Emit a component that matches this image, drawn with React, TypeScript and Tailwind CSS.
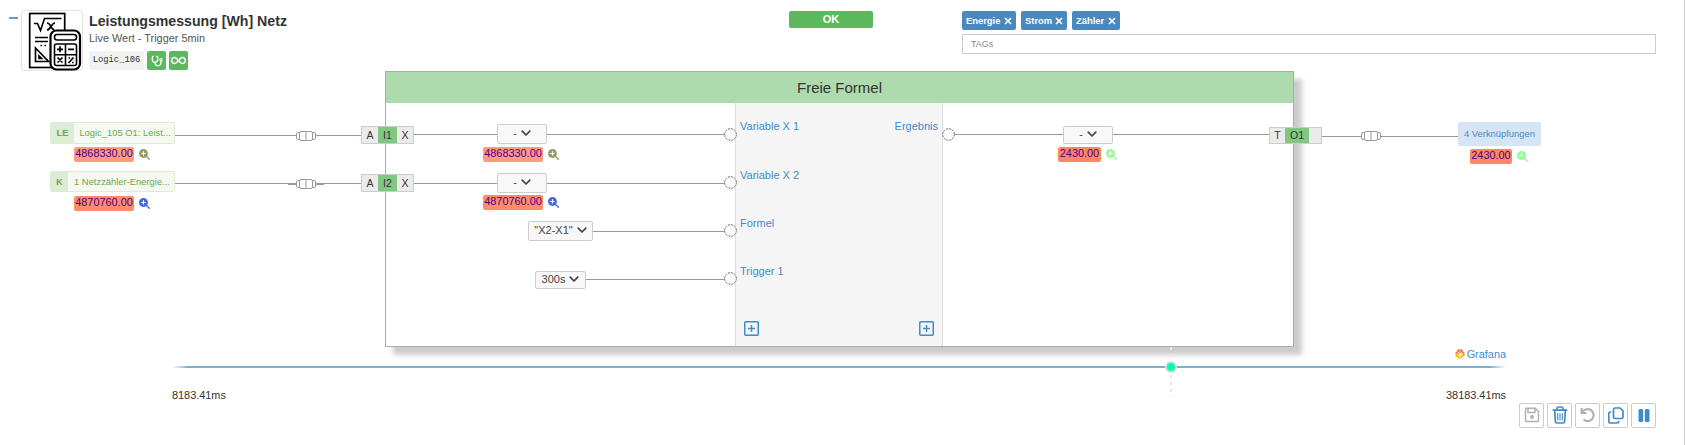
import type { ReactNode } from "react";
import { FaStethoscope, FaInfinity, FaMagnifyingGlassPlus } from "react-icons/fa6";

function Chevron() {
  return (
    <svg viewBox="0 0 10 7" className="h-[7px] w-[10px] shrink-0" fill="none" stroke="#444" strokeWidth="1.7">
      <path d="M1.200 1.200 5 5 8.800 1.200" strokeLinecap="round" strokeLinejoin="round" />
    </svg>
  );
}

function FormulaLogo() {
  return (
    <svg viewBox="0 0 54 60" className="h-[60px] w-[54px] shrink-0" fill="none" stroke="#000" strokeWidth="2">
      <rect x="1.700" y="2.500" width="35" height="54" strokeWidth="1.700" />
      <path d="M6 12.500h3.500l3 7 4-12h17" strokeWidth="1.600" />
      <path d="M19 12c4 0 4 7 7.500 7M27 12c-4 0-4 7-8 7" strokeWidth="1.700" />
      <path d="M7 26.500h13M7 30.500h13" strokeWidth="1.400" />
      <path d="M12.500 34.500h1.600M16.500 34.500h1.600" strokeWidth="1.600" />
      <path d="M7.500 37v13.500h13zM11 45v2.500h2.500z" strokeWidth="1.700" />
      <rect x="22.500" y="19.500" width="29.500" height="39" rx="6" fill="#fff" strokeWidth="2.200" />
      <rect x="26.500" y="23.500" width="22" height="5.500" rx="2.500" strokeWidth="1.600" />
      <rect x="26.500" y="33" width="22" height="21.500" rx="2" strokeWidth="1.600" />
      <path d="M37.500 33v21.500M26.500 43.700h22" strokeWidth="1.600" />
      <path d="M29 38.300h6M32 35.300v6M40 38.300h6" strokeWidth="1.700" />
      <path d="m29.500 46.500 5 5M34.500 46.500l-5 5M40.500 52l5-5.500M40.500 47h1.600M44 51.500h1.600" strokeWidth="1.700" />
    </svg>
  );
}

function Tag({ label, className }: { label: string; className: string }) {
  return (
    <span className={`flex h-[19px] items-center justify-between rounded-[2px] bg-[#4b89bc] px-1 text-[9.4px] font-bold leading-none text-white ${className}`}>
      {label}
      <svg viewBox="0 0 8 8" className="h-[8px] w-[8px]" stroke="#fff" strokeWidth="1.700">
        <path d="M1 1 7 7M7 1 1 7" />
      </svg>
    </span>
  );
}

function Select({ label, className }: { label: string; className: string }) {
  return (
    <button className={`absolute flex items-center justify-center gap-[4px] rounded-[2px] border border-[#ccc] bg-[#f8f8f8] pb-[2px] text-[11px] leading-none text-[#444] ${className}`}>
      <span>{label}</span>
      <Chevron />
    </button>
  );
}

function Reading({ value, className, bg, zoom }: { value: string; className: string; bg: string; zoom: string }) {
  return (
    <div className={`absolute flex h-[15px] items-center gap-[5px] text-[10.9px] leading-none text-[#4b0082] ${className}`}>
      <span className={`flex h-[15px] items-center justify-center rounded-[2px] pb-[3px] ${bg}`}>{value}</span>
      <FaMagnifyingGlassPlus className={`h-[11px] w-[11px] shrink-0 ${zoom}`} />
    </div>
  );
}

function Wire({ className }: { className: string }) {
  return <div className={`absolute h-px bg-[#999] ${className}`} />;
}

function Pin({ className }: { className: string }) {
  return (
    <svg viewBox="0 0 13 13" className={`absolute h-[13px] w-[13px] ${className}`}>
      <circle cx="6.500" cy="6.500" r="5.800" fill="#fff" stroke="#666" strokeDasharray="2 1" />
    </svg>
  );
}

function Coupler({ className }: { className: string }) {
  return (
    <svg viewBox="0 0 20 10" className={`absolute h-[10px] w-[20px] ${className}`} fill="#fff" stroke="#999">
      <rect x=".5" y="1.500" width="4" height="7" rx="1.500" />
      <rect x="15.500" y="1.500" width="4" height="7" rx="1.500" />
      <rect x="3.500" y=".5" width="13" height="9" rx="1.500" />
      <path d="M10 0v10" />
    </svg>
  );
}

function Port({ left, name, right, className }: { left: string; name: string; right: string; className: string }) {
  return (
    <div className={`absolute flex w-[53px] items-stretch border border-[#ccc] bg-[#ebebeb] text-[10.5px] leading-none text-[#333] ${className}`}>
      <span className={`flex items-center justify-center ${right ? "w-4" : "w-[15px]"}`}>{left}</span>
      <span className={`flex items-center justify-center bg-[#80c780] ${right ? "w-[19px]" : "w-[24px]"}`}>{name}</span>
      <span className="flex flex-1 items-center justify-center">{right}</span>
    </div>
  );
}

function Source({ kind, label, className, kindWidth }: { kind: string; label: string; className: string; kindWidth: string }) {
  return (
    <div className={`absolute left-[50px] flex w-[125px] overflow-hidden rounded-[2px] border border-[#dcecd5] bg-[#f5f9f2] text-[9.400px] leading-none text-[#6aa84f] ${className}`}>
      <span className={`flex items-center justify-center bg-[#dcecd5] font-bold ${kindWidth}`}>{kind}</span>
      <span className="flex flex-1 items-center justify-center whitespace-nowrap pl-[2px]">{label}</span>
    </div>
  );
}

function AddBox({ className }: { className: string }) {
  return (
    <svg viewBox="0 0 15 15" className={`absolute h-[15px] w-[15px] ${className}`} fill="none" stroke="#428bca" strokeWidth="1.500">
      <rect x=".75" y=".75" width="13.500" height="13.500" rx="1" />
      <path d="M7.500 4v7M4 7.500h7" />
    </svg>
  );
}

function ToolButton({ children }: { children: ReactNode }) {
  return <button className="flex h-[25px] w-[25px] items-center justify-center rounded-[2px] border border-[#ccc] bg-white pb-px">{children}</button>;
}

export default function App() {
  return (
    <main className="flex h-[445px] w-[1685px] flex-col overflow-hidden border-r border-[#ccc] bg-white font-['Liberation_Sans',Arial,sans-serif] text-[#333]">
      <header className="flex h-[71px] shrink-0 items-start">
        <div className="ml-[9px] mt-[17px] h-[2px] w-[9px] bg-[#5b9bd0]" />
        <div className="ml-[3px] mt-[10px] flex h-[61px] w-[62px] items-center justify-end rounded-[4px] border border-[#e2e2e2]">
          <FormulaLogo />
        </div>
        <div className="ml-[6px] mt-[13px] w-[700px]">
          <h1 className="whitespace-nowrap text-[14.150px] font-bold leading-[16px]">Leistungsmessung [Wh] Netz</h1>
          <p className="mt-[2px] text-[10.900px] leading-[14px] text-[#555]">Live Wert - Trigger 5min</p>
          <div className="mt-[6px] flex gap-[3px]">
            <span className="flex h-[19px] w-[55px] items-center justify-center rounded-[2px] bg-[#f2f2f2] font-['Liberation_Mono',monospace] text-[8.8px] leading-none">Logic_106</span>
            <span className="flex h-[19px] w-[19px] items-center justify-center rounded-[2px] bg-[#5cb85c] text-white">
              <FaStethoscope className="h-[12px] w-[12px]" />
            </span>
            <span className="flex h-[19px] w-[19px] items-center justify-center rounded-[2px] bg-[#5cb85c] text-white">
              <FaInfinity className="h-[15px] w-[15px]" />
            </span>
          </div>
        </div>
        <div className="mt-[11px] flex h-[17px] w-[84px] items-center justify-center rounded-[2px] bg-[#5cb85c] text-[11px] font-bold leading-none text-white">OK</div>
        <div className="ml-[89px] mt-[11px] w-[694px]">
          <div className="flex gap-[5px]">
            <Tag label="Energie" className="w-[54px]" />
            <Tag label="Strom" className="w-[46px]" />
            <Tag label="Zähler" className="w-[48px]" />
          </div>
          <div className="mt-[4px] flex h-[20px] items-center border border-[#ccc] px-2 text-[9px] leading-none text-[#888]">TAGs</div>
        </div>
      </header>

      <section className="relative h-[276px] shrink-0">
        <Wire className="left-[175px] top-[64px] w-[186px]" />
        <Wire className="left-[175px] top-[112px] w-[186px]" />
        <Wire className="left-[288px] top-[113px] w-[36px]" />
        <Wire className="left-[1322px] top-[65px] w-[136px]" />

        <div className="absolute left-[385px] top-0 flex h-[276px] w-[909px] flex-col border border-[#aaa] bg-white shadow-[8px_8px_5px_0_#ccc]">
          <h2 className="flex h-[31px] shrink-0 items-center justify-center bg-[#addbad] pb-px text-[15px] leading-none">Freie Formel</h2>
          <div className="flex flex-1">
            <div className="w-[349px]" />
            <div className="w-[208px] border-x border-[#ddd] bg-[#f5f5f5] px-[4px] pt-[16px] text-[11px] leading-[15px] text-[#428bca]">
              <div className="flex h-[48.500px] justify-between">
                <span>Variable X 1</span>
                <span>Ergebnis</span>
              </div>
              <div className="h-[48px]">Variable X 2</div>
              <div className="h-[48px]">Formel</div>
              <div>Trigger 1</div>
            </div>
          </div>
        </div>

        <Source kind="LE" label="Logic_105 O1: Leist..." className="top-[51px] h-[22px]" kindWidth="w-[23px]" />
        <Source kind="K" label="1 Netzzähler-Energie..." className="top-[100px] h-[21px]" kindWidth="w-[17px]" />
        <Reading value="4868330.00" className="left-[74px] top-[76px]" bg="w-[60px] bg-[#ff9980]" zoom="text-[#999966]" />
        <Reading value="4870760.00" className="left-[74px] top-[125px]" bg="w-[60px] bg-[#ff8c69]" zoom="text-[#4169e1]" />
        <Coupler className="left-[296px] top-[60px]" />
        <Coupler className="left-[296px] top-[108px]" />
        <Port left="A" name="I1" right="X" className="left-[361px] top-[55px] h-[18px]" />
        <Port left="A" name="I2" right="X" className="left-[361px] top-[103px] h-[18px]" />

        <Wire className="left-[414px] top-[63px] w-[312px]" />
        <Wire className="left-[414px] top-[112px] w-[312px]" />
        <Wire className="left-[593px] top-[160px] w-[133px]" />
        <Wire className="left-[586px] top-[208px] w-[140px]" />
        <Wire className="left-[954px] top-[63px] w-[315px]" />
        <Pin className="left-[724px] top-[57px]" />
        <Pin className="left-[724px] top-[105px]" />
        <Pin className="left-[724px] top-[153px]" />
        <Pin className="left-[724px] top-[201px]" />
        <Pin className="left-[942px] top-[57px]" />
        <Select label="-" className="left-[497px] top-[53px] h-[20px] w-[50px]" />
        <Select label="-" className="left-[497px] top-[102px] h-[20px] w-[50px]" />
        <Select label={'"X2-X1"'} className="left-[528px] top-[150px] h-[20px] w-[65px]" />
        <Select label="300s" className="left-[535px] top-[200px] h-[18px] w-[51px]" />
        <Select label="-" className="left-[1063px] top-[55px] h-[18px] w-[50px]" />
        <Reading value="4868330.00" className="left-[483px] top-[76px]" bg="w-[60px] bg-[#ff9980]" zoom="text-[#999966]" />
        <Reading value="4870760.00" className="left-[483px] top-[124px]" bg="w-[60px] bg-[#ff8c69]" zoom="text-[#4169e1]" />
        <Reading value="2430.00" className="left-[1058px] top-[76px]" bg="w-[43px] bg-[#ff8566]" zoom="text-[#98fb98]" />
        <AddBox className="left-[744px] top-[250px]" />
        <AddBox className="left-[919px] top-[250px]" />

        <Port left="T" name="O1" right="" className="left-[1269px] top-[56px] h-[17px]" />
        <Coupler className="left-[1361px] top-[60px]" />
        <div className="absolute left-[1458px] top-[51px] flex h-[24px] w-[83px] items-center justify-center rounded-[2px] bg-[#d6e5f4] text-[9.400px] leading-none text-[#428bca]">4 Verknüpfungen</div>
        <Reading value="2430.00" className="left-[1470px] top-[78px]" bg="w-[42px] bg-[#ff8566]" zoom="text-[#98fb98]" />

        <div className="absolute left-[1170px] top-[276px] h-[50px] w-[2px] bg-[repeating-linear-gradient(to_bottom,#e8e8e8_0_3px,transparent_3px_7px)]" />
        <div className="absolute left-[1165px] top-[290px] h-[12px] w-[12px] rounded-full border-2 border-[#ddd] bg-[#0fa]" />
      </section>

      <footer className="flex flex-1 flex-col">
        <div className="ml-[172px] w-[1334px]">
          <div className="flex h-[19px] items-center justify-end gap-[2px] pb-[5px] text-[10.900px] leading-none text-[#428bca]">
            <svg viewBox="0 0 20 20" className="h-[10px] w-[10px]" fill="none">
              <defs>
                <linearGradient id="flame" x1="0" y1="0" x2="0" y2="1">
                  <stop offset="0" stopColor="#f05a28" />
                  <stop offset="1" stopColor="#fbca0a" />
                </linearGradient>
              </defs>
              <circle cx="10" cy="10" r="7.800" stroke="url(#flame)" strokeWidth="3.600" strokeDasharray="4.200 1.926" />
              <circle cx="10" cy="10" r="6.300" stroke="url(#flame)" strokeWidth="2" />
              <path d="M13.500 11a3.500 3.500 0 1 1-3.500-4q3 0 2.500 3" stroke="url(#flame)" strokeWidth="1.600" />
            </svg>
            Grafana
          </div>
          <div className="h-[2px] bg-[linear-gradient(to_right,transparent,#7ab0cf_16px,#7ab0cf_calc(100%-16px),transparent)]" />
          <div className="mt-[20px] flex h-[15px] items-start justify-between pt-px text-[10.900px] leading-[12px]">
            <span>8183.41ms</span>
            <span>38183.41ms</span>
          </div>
        </div>
        <div className="ml-[1519px] flex gap-[3px]">
          <ToolButton>
            <svg viewBox="0 0 16 16" className="h-4 w-4" fill="none" stroke="#b0b0b0" strokeWidth="1.500">
              <path d="M2.800 1.200h8.400l3.300 3.300v8.700a1.300 1.300 0 0 1-1.300 1.300H2.800a1.300 1.300 0 0 1-1.300-1.300V2.500a1.300 1.300 0 0 1 1.300-1.300z" />
              <path d="M4 1.500v4h7v-4" />
              <circle cx="8" cy="10" r="1.200" fill="#b0b0b0" />
            </svg>
          </ToolButton>
          <ToolButton>
            <svg viewBox="0 0 16 18" className="h-[18px] w-4" fill="none" stroke="#428bca" strokeWidth="1.700" strokeLinecap="round">
              <path d="M1.300 4.200h13.400M5 4V2.500A1.500 1.500 0 0 1 6.500 1h3A1.500 1.500 0 0 1 11 2.500V4" />
              <path d="m2.700 4.500.7 11.300a1.300 1.300 0 0 0 1.300 1.200h6.600a1.300 1.300 0 0 0 1.300-1.200l.7-11.300" />
              <path d="M5.700 7.500v6.500M8 7.500v6.500M10.300 7.500v6.500" strokeWidth="1.100" />
            </svg>
          </ToolButton>
          <ToolButton>
            <svg viewBox="0 0 16 16" className="h-4 w-4" fill="none" stroke="#b0b0b0" strokeWidth="2.200">
              <path d="M1.600 1v5h5" />
              <path d="M2 6A6 6 0 1 1 3.600 12.600" />
            </svg>
          </ToolButton>
          <ToolButton>
            <svg viewBox="0 0 16 17" className="h-[17px] w-4" fill="none" stroke="#428bca" strokeWidth="1.700" strokeLinejoin="round">
              <path d="M7 1h5.200L15 3.800V10a1.500 1.500 0 0 1-1.500 1.500H7A1.500 1.500 0 0 1 5.500 10V2.500A1.500 1.500 0 0 1 7 1z" />
              <path d="M3.300 5H2.300A1.500 1.500 0 0 0 .8 6.500v8A1.500 1.500 0 0 0 2.300 16h6.900a1.500 1.500 0 0 0 1.500-1.500v-.800" />
            </svg>
          </ToolButton>
          <ToolButton>
            <svg viewBox="0 0 12 13" className="h-[13px] w-3" fill="#428bca">
              <rect x=".5" width="4.700" height="13" rx="1.500" />
              <rect x="6.800" width="4.700" height="13" rx="1.500" />
            </svg>
          </ToolButton>
        </div>
      </footer>
    </main>
  );
}
